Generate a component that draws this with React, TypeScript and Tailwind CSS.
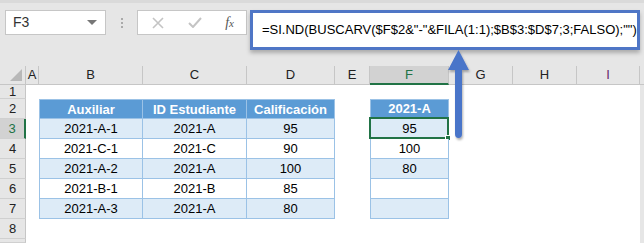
import { Fragment } from 'react';

const cols = ['A', 'B', 'C', 'D', 'E', 'F', 'G', 'H', 'I'];
const colWidths = [13, 104, 104, 88, 35, 79, 64, 64, 63];
const rowHeights = [14, 20, 20, 20, 20, 20, 20, 20, 4];

const table = [
  ['2021-A-1', '2021-A', '95'],
  ['2021-C-1', '2021-C', '90'],
  ['2021-A-2', '2021-A', '100'],
  ['2021-B-1', '2021-B', '85'],
  ['2021-A-3', '2021-A', '80'],
];
const result = ['95', '100', '80', '', ''];

const formula = '=SI.ND(BUSCARV($F$2&"-"&FILA(1:1);$B$3:$D$7;3;FALSO);"")';

function Cell({ row, col }: { row: number; col: number }) {
  // row: 1-based sheet row, col: 0 = A
  const base = 'flex items-center justify-center text-[13px] text-black';
  if (row === 2 && col >= 1 && col <= 3) {
    const label = ['Auxiliar', 'ID Estudiante', 'Calificación'][col - 1];
    return (
      <div className={`${base} bg-[#5b9bd5] font-bold text-white border-t border-r border-[#9bc2e6] ${col === 1 ? 'border-l' : ''}`}>
        {label}
      </div>
    );
  }
  if (row >= 3 && row <= 7 && col >= 1 && col <= 3) {
    const shade = row % 2 === 1 ? 'bg-[#ddebf7]' : 'bg-white';
    return (
      <div className={`${base} ${shade} border-r border-b border-t border-[#9bc2e6] -mt-px ${col === 1 ? 'border-l' : ''}`}>
        {table[row - 3][col - 1]}
      </div>
    );
  }
  if (row === 2 && col === 5) {
    return (
      <div className={`${base} bg-[#5b9bd5] font-bold text-white border border-[#9bc2e6]`}>2021-A</div>
    );
  }
  if (row >= 3 && row <= 7 && col === 5) {
    const shade = row % 2 === 1 ? 'bg-[#ddebf7]' : 'bg-white';
    return (
      <div className={`${base} ${shade} relative border-l border-r border-b border-[#9bc2e6]`}>
        {result[row - 3]}
        {row === 3 && (
          <>
            <div className="absolute -left-[2px] -top-[2px] -right-[1px] -bottom-[1px] border-2 border-[#217346]" />
            <div className="absolute -right-[3px] -bottom-[3px] w-[6px] h-[6px] bg-[#217346] border border-white" />
          </>
        )}
      </div>
    );
  }
  return <div className="bg-white" />;
}

export default function App() {
  return (
    <div
      className="relative w-[644px] h-[243px] overflow-hidden bg-[#e6e6e6]"
      style={{ fontFamily: '"Liberation Sans", Arial, sans-serif' }}
    >
      {/* toolbar */}
      <div className="h-[3px] bg-[#dadada]" />
      <div className="flex items-start h-[63px] pt-[7px]">
        <div className="shrink-0 ml-[5px] w-[101px] h-[25px] bg-white border border-[#c6c6c6] flex items-center justify-between pl-[7px] pr-[8px]">
          <span className="text-[14px] text-[#333]">F3</span>
          <span className="w-0 h-0 border-l-[5px] border-r-[5px] border-t-[5px] border-l-transparent border-r-transparent border-t-[#777]" />
        </div>
        <div className="shrink-0 w-[31px] h-[25px] flex flex-col items-center justify-center gap-[2px]">
          <span className="w-[2px] h-[2px] bg-[#aaa]" />
          <span className="w-[2px] h-[2px] bg-[#aaa]" />
          <span className="w-[2px] h-[2px] bg-[#aaa]" />
        </div>
        <div className="shrink-0 w-[110px] h-[25px] bg-white border border-[#c6c6c6] flex items-center justify-between pl-[14px] pr-[12px]">
          <svg width="12" height="12" viewBox="0 0 12 12">
            <path d="M1 1L11 11M11 1L1 11" stroke="#c4c4c4" strokeWidth="1.6" fill="none" />
          </svg>
          <svg width="14" height="11" viewBox="0 0 14 11">
            <path d="M1 6L5 10L13 1" stroke="#c4c4c4" strokeWidth="2" fill="none" />
          </svg>
          <span className="text-[14px] italic text-[#555]" style={{ fontFamily: '"Liberation Serif", serif' }}>
            f<span className="text-[11px]">x</span>
          </span>
        </div>
        <div className="min-w-0 ml-[3px] flex-1 mr-[4px] h-[40px] bg-white border-[3px] border-[#4f76c6] shadow-[0_3px_4px_rgba(0,0,0,0.25)] pl-[9px] pt-[4px] overflow-hidden">
          <span className="text-[13px] text-black whitespace-nowrap">{formula}</span>
        </div>
      </div>

      {/* sheet */}
      <div
        className="grid"
        style={{
          gridTemplateColumns: `26px ${colWidths.map((w) => `${w}px`).join(' ')} 1fr`,
          gridTemplateRows: `19px ${rowHeights.map((h) => `${h}px`).join(' ')}`,
        }}
      >
        <div className="relative bg-[#e6e6e6] border-r border-b border-[#c6c6c6]">
          <svg className="absolute right-[3px] bottom-[3px]" width="12" height="12" viewBox="0 0 12 12">
            <path d="M12 0L12 12L0 12Z" fill="#b8b8b8" />
          </svg>
        </div>
        {cols.map((c) => (
          <div
            key={c}
            className={`flex items-center justify-center text-[13px] border-r border-[#c6c6c6] ${
              c === 'F'
                ? 'bg-[#d2d2d2] text-[#217346] border-b-2 border-b-[#217346]'
                : c === 'I'
                ? 'bg-[#e6e6e6] text-[#6b1d6b] border-b border-b-[#c6c6c6]'
                : 'bg-[#e6e6e6] text-[#222] border-b border-b-[#c6c6c6]'
            }`}
          >
            {c}
          </div>
        ))}
        <div className="bg-[#e6e6e6] border-b border-[#c6c6c6]" />
        {rowHeights.map((_, ri) => {
          const row = ri + 1;
          return (
            <Fragment key={row}>
              <div
                className={`flex items-center justify-center text-[13px] text-[#222] border-b border-[#d0d0d0] ${
                  row === 3 ? 'bg-[#d2d2d2] text-[#217346] border-r-2 border-r-[#217346]' : 'bg-[#e6e6e6] border-r border-r-[#c6c6c6]'
                }`}
              >
                {row <= 8 ? row : ''}
              </div>
              {cols.map((_, ci) => (
                <Cell key={ci} row={row} col={ci} />
              ))}
              <div className="bg-[#e6e6e6]" />
            </Fragment>
          );
        })}
      </div>

      {/* arrow */}
      <svg className="absolute left-[446px] top-[49px]" width="26" height="94" viewBox="0 0 26 94">
        <defs>
          <filter id="sh" x="-50%" y="-20%" width="200%" height="140%">
            <feDropShadow dx="1" dy="2" stdDeviation="1.2" floodColor="#000" floodOpacity="0.3" />
          </filter>
        </defs>
        <g filter="url(#sh)">
          <path d="M12.5 1L23 21L16 21L16 85Q16 89 12.5 89Q9 89 9 85L9 21L2 21Z" fill="#4a74c9" />
        </g>
      </svg>
    </div>
  );
}
